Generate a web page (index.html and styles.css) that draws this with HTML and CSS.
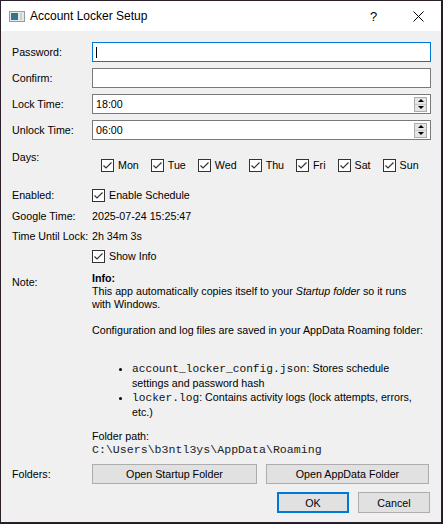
FILE: index.html
```html
<!DOCTYPE html>
<html>
<head>
<meta charset="utf-8">
<link rel="stylesheet" href="styles.css">
</head>
<body>
<div class="window">
  <div class="titlebar">
    <svg class="appicon" width="16" height="11" viewBox="0 0 16 11">
      <rect x="0.5" y="0.5" width="15" height="10" fill="#e8e8e8" stroke="#9a9a9a"/>
      <defs><linearGradient id="g" x1="0" y1="0" x2="0" y2="1"><stop offset="0" stop-color="#2a7a6a"/><stop offset="1" stop-color="#3b6fae"/></linearGradient></defs>
      <rect x="2" y="2" width="7" height="7" fill="url(#g)"/>
      <rect x="11" y="2" width="2" height="7" fill="#c8d0d8"/>
    </svg>
    <span class="title">Account Locker Setup</span>
    <span class="help">?</span>
    <svg class="close" width="11" height="11" viewBox="0 0 11 11"><path d="M0.5 0.5 L10.5 10.5 M10.5 0.5 L0.5 10.5" stroke="#000" stroke-width="1"/></svg>
  </div>

  <div class="content">
    <div class="frow r-pw">
      <label>Password:</label>
      <div class="input focus"><span class="caret"></span></div>
    </div>
    <div class="frow r-gap6">
      <label>Confirm:</label>
      <div class="input"></div>
    </div>
    <div class="frow r-gap6">
      <label>Lock Time:</label>
      <div class="input spin"><span class="val">18:00</span><span class="spinbtn"><span class="up"></span><span class="down"></span></span></div>
    </div>
    <div class="frow r-gap6">
      <label>Unlock Time:</label>
      <div class="input spin"><span class="val">06:00</span><span class="spinbtn"><span class="up"></span><span class="down"></span></span></div>
    </div>

    <div class="frow r-days">
      <label class="top">Days:</label>
      <div class="days">
        <span class="cb"><span class="box"><svg width="11" height="11" viewBox="0 0 11 11"><path d="M1.5 5.5 L4 8 L9.5 2.5" fill="none" stroke="#333" stroke-width="1.2"/></svg></span>Mon</span>
        <span class="cb"><span class="box"><svg width="11" height="11" viewBox="0 0 11 11"><path d="M1.5 5.5 L4 8 L9.5 2.5" fill="none" stroke="#333" stroke-width="1.2"/></svg></span>Tue</span>
        <span class="cb"><span class="box"><svg width="11" height="11" viewBox="0 0 11 11"><path d="M1.5 5.5 L4 8 L9.5 2.5" fill="none" stroke="#333" stroke-width="1.2"/></svg></span>Wed</span>
        <span class="cb"><span class="box"><svg width="11" height="11" viewBox="0 0 11 11"><path d="M1.5 5.5 L4 8 L9.5 2.5" fill="none" stroke="#333" stroke-width="1.2"/></svg></span>Thu</span>
        <span class="cb"><span class="box"><svg width="11" height="11" viewBox="0 0 11 11"><path d="M1.5 5.5 L4 8 L9.5 2.5" fill="none" stroke="#333" stroke-width="1.2"/></svg></span>Fri</span>
        <span class="cb"><span class="box"><svg width="11" height="11" viewBox="0 0 11 11"><path d="M1.5 5.5 L4 8 L9.5 2.5" fill="none" stroke="#333" stroke-width="1.2"/></svg></span>Sat</span>
        <span class="cb"><span class="box"><svg width="11" height="11" viewBox="0 0 11 11"><path d="M1.5 5.5 L4 8 L9.5 2.5" fill="none" stroke="#333" stroke-width="1.2"/></svg></span>Sun</span>
      </div>
    </div>

    <div class="frow srow r-en">
      <label>Enabled:</label>
      <span class="cb"><span class="box"><svg width="11" height="11" viewBox="0 0 11 11"><path d="M1.5 5.5 L4 8 L9.5 2.5" fill="none" stroke="#333" stroke-width="1.2"/></svg></span>Enable Schedule</span>
    </div>
    <div class="frow srow r-gap6">
      <label>Google Time:</label>
      <span>2025-07-24 15:25:47</span>
    </div>
    <div class="frow srow r-gap5">
      <label>Time Until Lock:</label>
      <span>2h 34m 3s</span>
    </div>
    <div class="frow srow r-gap5">
      <label></label>
      <span class="cb"><span class="box"><svg width="11" height="11" viewBox="0 0 11 11"><path d="M1.5 5.5 L4 8 L9.5 2.5" fill="none" stroke="#333" stroke-width="1.2"/></svg></span>Show Info</span>
    </div>

    <div class="frow r-note">
      <label class="note">Note:</label>
      <div class="info">
        <p class="b">Info:</p>
        <p>This app automatically copies itself to your <i>Startup folder</i> so it runs<br>with Windows.</p>
        <p class="para">Configuration and log files are saved in your AppData Roaming folder:</p>
        <ul>
          <li><code>account_locker_config.json</code>: Stores schedule<br>settings and password hash</li>
          <li><code>locker.log</code>: Contains activity logs (lock attempts, errors,<br>etc.)</li>
        </ul>
        <p class="fp">Folder path:</p>
        <p class="path">C:\Users\b3ntl3ys\AppData\Roaming</p>
      </div>
    </div>

    <div class="frow r-folders">
      <label>Folders:</label>
      <div class="btns2">
        <button class="btn">Open Startup Folder</button>
        <button class="btn">Open AppData Folder</button>
      </div>
    </div>

    <div class="okrow">
      <button class="btn ok">OK</button>
      <button class="btn">Cancel</button>
    </div>
  </div>
</div>
</body>
</html>
```

FILE: styles.css
```css
* { box-sizing: border-box; }
html, body { margin: 0; padding: 0; }
body {
  background: #2a1826;
  font-family: "Liberation Sans", Arial, sans-serif;
  font-size: 10.7px;
  color: #000;
  width: 443px;
  height: 524px;
  overflow: hidden;
}
.window {
  width: 442px;
  height: 523px;
  border: 1px solid #2b1f2a;
  background: #f0f0f0;
  display: flex;
  flex-direction: column;
}
.titlebar {
  flex: 0 0 30px;
  height: 30px;
  background: #fff;
  display: flex;
  align-items: center;
  padding-left: 8px;
}
.appicon { margin-top: 1px; }
.title {
  margin-left: 5px;
  font-size: 12px;
  font-family: "Liberation Sans", Arial, sans-serif;
}
.help {
  margin-left: auto;
  font-size: 13px;
  width: 8px;
  margin-right: 35px;
}
.close { margin-right: 17px; }

.content {
  padding: 11px 10px 0 11px;
  display: flex;
  flex-direction: column;
}
.frow {
  display: grid;
  grid-template-columns: 80px 1fr;
  align-items: center;
}
.frow label { white-space: nowrap; }
.r-gap6 { margin-top: 6px; }
.r-gap5 { margin-top: 5px; }

.input {
  height: 20px;
  background: #fff;
  border: 1px solid #7a7a7a;
  display: flex;
  align-items: center;
  padding-left: 3px;
}
.input.focus { border-color: #0078d7; }
.caret {
  width: 1px;
  height: 11px;
  background: #000;
}
.spin .val { line-height: 18px; }
.spinbtn {
  margin-left: auto;
  margin-right: 3px;
  width: 13px;
  height: 15px;
  border: 1px solid #adadad;
  background: #e5e5e5;
  display: flex;
  flex-direction: column;
}
.spinbtn span {
  flex: 1;
  display: flex;
  align-items: center;
  justify-content: center;
}
.spinbtn .up { border-bottom: 1px solid #c9c9c9; }
.spinbtn .up::before {
  content: "";
  border-left: 3px solid transparent;
  border-right: 3px solid transparent;
  border-bottom: 3px solid #000;
}
.spinbtn .down::before {
  content: "";
  border-left: 3px solid transparent;
  border-right: 3px solid transparent;
  border-top: 3px solid #000;
}

.r-days {
  margin-top: 10px;
  align-items: start;
  height: 32px;
}
.r-days label { line-height: 15px; }
.days {
  display: flex;
  gap: 12px;
  padding-left: 9px;
  padding-top: 8px;
}
.cb {
  display: inline-flex;
  align-items: center;
  gap: 4px;
  line-height: 15px;
  white-space: nowrap;
}
.box {
  width: 13px;
  height: 13px;
  border: 1px solid #333;
  background: #fff;
  display: inline-flex;
  align-items: center;
  justify-content: center;
}
.box svg { display: block; }

.srow { height: 15px; line-height: 15px; }
.r-en { margin-top: 6px; }

.r-note {
  margin-top: 8px;
  align-items: start;
}
.note { padding-top: 4px; line-height: 13px; }
.info p { margin: 0; line-height: 13px; white-space: nowrap; }
.info .b { font-weight: bold; }
.info .para { margin-top: 13px; }
.info ul {
  margin: 24px 0 0 0;
  padding-left: 40px;
  line-height: 14px;
  white-space: nowrap;
}
.info code {
  font-family: "Liberation Mono", "Courier New", monospace;
  font-size: 11.2px;
  color: #111;
}
.info .fp { margin-top: 10px; line-height: 14px; }
.info .path {
  line-height: 14px;
  font-family: "Liberation Mono", "Courier New", monospace;
  font-size: 11.6px;
  color: #222;
}

.r-folders { margin-top: 7px; }
.btns2 {
  display: grid;
  grid-template-columns: 165px 163px;
  gap: 9px;
}
.btn {
  height: 20px;
  background: #e1e1e1;
  border: 1px solid #adadad;
  font-family: "Liberation Sans", Arial, sans-serif;
  font-size: 10.7px;
  color: #000;
  padding: 0;
  margin: 0;
}
.okrow {
  margin-top: 8px;
  display: flex;
  justify-content: flex-end;
  gap: 9px;
  padding-right: 1px;
}
.okrow .btn { width: 72px; height: 21px; }
.btn.ok { border: 2px solid #0078d7; }
```
